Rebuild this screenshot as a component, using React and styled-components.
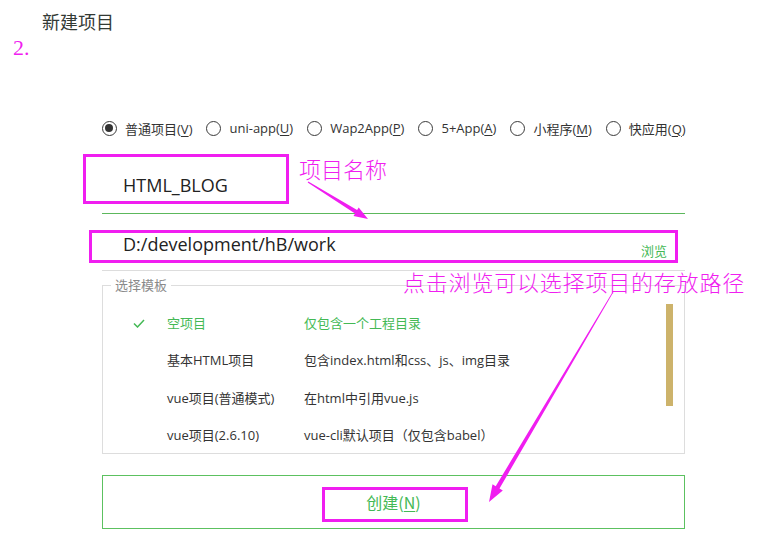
import styled, { createGlobalStyle } from "styled-components";

const GlobalStyle = createGlobalStyle`
  html, body {
    margin: 0;
    padding: 0;
    background: #ffffff;
  }
  body {
    font-family: "Open Sans", "Noto Sans CJK SC", sans-serif;
    color: #333333;
  }
`;

const MAGENTA = "#f01ef0";
const GREEN = "#44b955";

const Page = styled.div`
  position: relative;
  width: 776px;
  height: 556px;
  overflow: hidden;
  background: #ffffff;
`;

const Title = styled.h1`
  margin: 0;
  padding: 9px 0 0 42px;
  font-family: "Noto Sans CJK SC", sans-serif;
  font-size: 18px;
  font-weight: 400;
  line-height: 25px;
  color: #333a35;
`;

const Form = styled.div`
  width: 583px;
  margin-left: 102px;
  padding-top: 84px;
`;

const RadioRow = styled.div`
  display: flex;
  align-items: center;
  gap: 14px;
  height: 20px;
  white-space: nowrap;
`;

const RadioItem = styled.label`
  display: flex;
  align-items: center;
  gap: 8px;
  font-size: 13px;
  color: #333;
  u {
    text-decoration-thickness: 1px;
    text-underline-offset: 2px;
  }
`;

const RadioDot = styled.span`
  position: relative;
  width: 15px;
  height: 15px;
  box-sizing: border-box;
  border: 1.5px solid #3a3a3a;
  border-radius: 50%;
  &::after {
    content: "";
    display: ${(p) => (p.$checked ? "block" : "none")};
    position: absolute;
    left: 2px;
    top: 2px;
    width: 8px;
    height: 8px;
    border-radius: 50%;
    background: #333;
  }
`;

const NameField = styled.div`
  display: flex;
  align-items: flex-end;
  box-sizing: border-box;
  height: 56px;
  margin-top: 20px;
  padding: 0 0 16px 21px;
  border-bottom: 1px solid #5cb85c;
  font-size: 18px;
  line-height: 24px;
  color: #222;
`;

const PathField = styled.div`
  display: flex;
  justify-content: space-between;
  box-sizing: border-box;
  height: 57px;
  padding: 4px 18px 0 21px;
  border-bottom: 1px solid #dddddd;
`;

const PathText = styled.span`
  align-self: center;
  font-size: 18px;
  line-height: 24px;
  color: #222;
`;

const Browse = styled.span`
  align-self: flex-end;
  margin-bottom: 10px;
  font-family: "Noto Sans CJK SC", sans-serif;
  font-size: 13px;
  line-height: 18px;
  color: ${GREEN};
`;

const TemplateBox = styled.fieldset`
  margin: 5px 0 0;
  padding: 0;
  border: 1px solid #dddddd;
  min-width: 0;
`;

const Legend = styled.legend`
  margin-left: 8px;
  padding: 0 4px;
  font-family: "Noto Sans CJK SC", sans-serif;
  font-size: 13px;
  line-height: 18px;
  color: #8a8a8a;
`;

const TemplateList = styled.div`
  display: flex;
  padding-top: 10px;
`;

const Rows = styled.div`
  flex: 1;
`;

const Row = styled.div`
  display: grid;
  grid-template-columns: 34px 137px 1fr;
  align-items: center;
  height: 37.3px;
  padding-left: 30px;
  font-size: 13px;
  color: ${(p) => (p.$active ? GREEN : "#333")};
`;

const Thumb = styled.div`
  align-self: flex-start;
  width: 7px;
  height: 102px;
  margin-right: 11px;
  background: #cdb36b;
`;

const CreateButton = styled.button`
  display: block;
  width: 100%;
  height: 54px;
  margin-top: 21px;
  border: 1px solid #5cc160;
  background: #ffffff;
  font-family: "Noto Sans CJK SC", sans-serif;
  font-size: 16px;
  color: ${GREEN};
  u {
    text-underline-offset: 2px;
  }
`;

const Note = styled.div`
  position: absolute;
  left: ${(p) => p.$x}px;
  top: ${(p) => p.$y}px;
  font-family: "Noto Sans CJK SC", sans-serif;
  font-size: 22px;
  font-weight: 300;
  line-height: 26px;
  letter-spacing: ${(p) => p.$spacing || 0}px;
  color: ${MAGENTA};
  white-space: nowrap;
`;

const StepNumber = styled.div`
  position: absolute;
  left: 13px;
  top: 36px;
  font-family: "Liberation Serif", serif;
  font-size: 22px;
  line-height: 24px;
  color: ${MAGENTA};
`;

const Frame = styled.div`
  position: absolute;
  left: ${(p) => p.$x}px;
  top: ${(p) => p.$y}px;
  width: ${(p) => p.$w}px;
  height: ${(p) => p.$h}px;
  box-sizing: border-box;
  border: 3px solid ${MAGENTA};
`;

const ArrowLayer = styled.svg`
  position: absolute;
  left: 0;
  top: 0;
  pointer-events: none;
`;

function arrowPoints(x1, y1, x2, y2, w0, w1, headLen, headW) {
  const dx = x2 - x1;
  const dy = y2 - y1;
  const len = Math.hypot(dx, dy);
  const ux = dx / len;
  const uy = dy / len;
  const px = -uy;
  const py = ux;
  const bx = x2 - ux * headLen;
  const by = y2 - uy * headLen;
  const pts = [
    [x1 + px * w0, y1 + py * w0],
    [bx + px * w1, by + py * w1],
    [bx + px * headW, by + py * headW],
    [x2, y2],
    [bx - px * headW, by - py * headW],
    [bx - px * w1, by - py * w1],
    [x1 - px * w0, y1 - py * w0],
  ];
  return pts.map((p) => p.map((v) => v.toFixed(1)).join(",")).join(" ");
}

function Radio({ checked, label, hotkey }) {
  return (
    <RadioItem>
      <RadioDot $checked={checked} />
      <span>
        {label}(<u>{hotkey}</u>)
      </span>
    </RadioItem>
  );
}

const radios = [
  ["普通项目", "V"],
  ["uni-app", "U"],
  ["Wap2App", "P"],
  ["5+App", "A"],
  ["小程序", "M"],
  ["快应用", "Q"],
];

const templates = [
  ["空项目", "仅包含一个工程目录"],
  ["基本HTML项目", "包含index.html和css、js、img目录"],
  ["vue项目(普通模式)", "在html中引用vue.js"],
  ["vue项目(2.6.10)", "vue-cli默认项目（仅包含babel）"],
];

function Check() {
  return (
    <svg width="12" height="9" viewBox="0 0 12 9">
      <polyline
        points="1,4.5 4.5,8 11,1"
        fill="none"
        stroke={GREEN}
        strokeWidth="1.5"
      />
    </svg>
  );
}

export default function App() {
  return (
    <Page>
      <GlobalStyle />
      <Title>新建项目</Title>
      <Form>
        <RadioRow>
          {radios.map(([label, key], i) => (
            <Radio key={key} checked={i === 0} label={label} hotkey={key} />
          ))}
        </RadioRow>
        <NameField>HTML_BLOG</NameField>
        <PathField>
          <PathText>D:/development/hB/work</PathText>
          <Browse>浏览</Browse>
        </PathField>
        <TemplateBox>
          <Legend>选择模板</Legend>
          <TemplateList>
            <Rows>
              {templates.map(([name, desc], i) => (
                <Row key={name} $active={i === 0}>
                  <span>{i === 0 && <Check />}</span>
                  <span>{name}</span>
                  <span>{desc}</span>
                </Row>
              ))}
            </Rows>
            <Thumb />
          </TemplateList>
        </TemplateBox>
        <CreateButton>
          创建(<u>N</u>)
        </CreateButton>
      </Form>

      <StepNumber>2.</StepNumber>
      <Frame $x={83} $y={154} $w={206} $h={50} />
      <Frame $x={89} $y={230} $w={589} $h={33} />
      <Frame $x={322} $y={487} $w={146} $h={35} />
      <Note $x={299} $y={155}>项目名称</Note>
      <Note $x={403} $y={268} $spacing={0.8}>
        点击浏览可以选择项目的存放路径
      </Note>
      <ArrowLayer width="776" height="556">
        <polygon
          points={arrowPoints(308, 182, 368, 219, 0.6, 2, 14, 5)}
          fill={MAGENTA}
        />
        <polygon
          points={arrowPoints(613, 292, 489, 502, 0.4, 2.2, 17, 6)}
          fill={MAGENTA}
        />
      </ArrowLayer>
    </Page>
  );
}
